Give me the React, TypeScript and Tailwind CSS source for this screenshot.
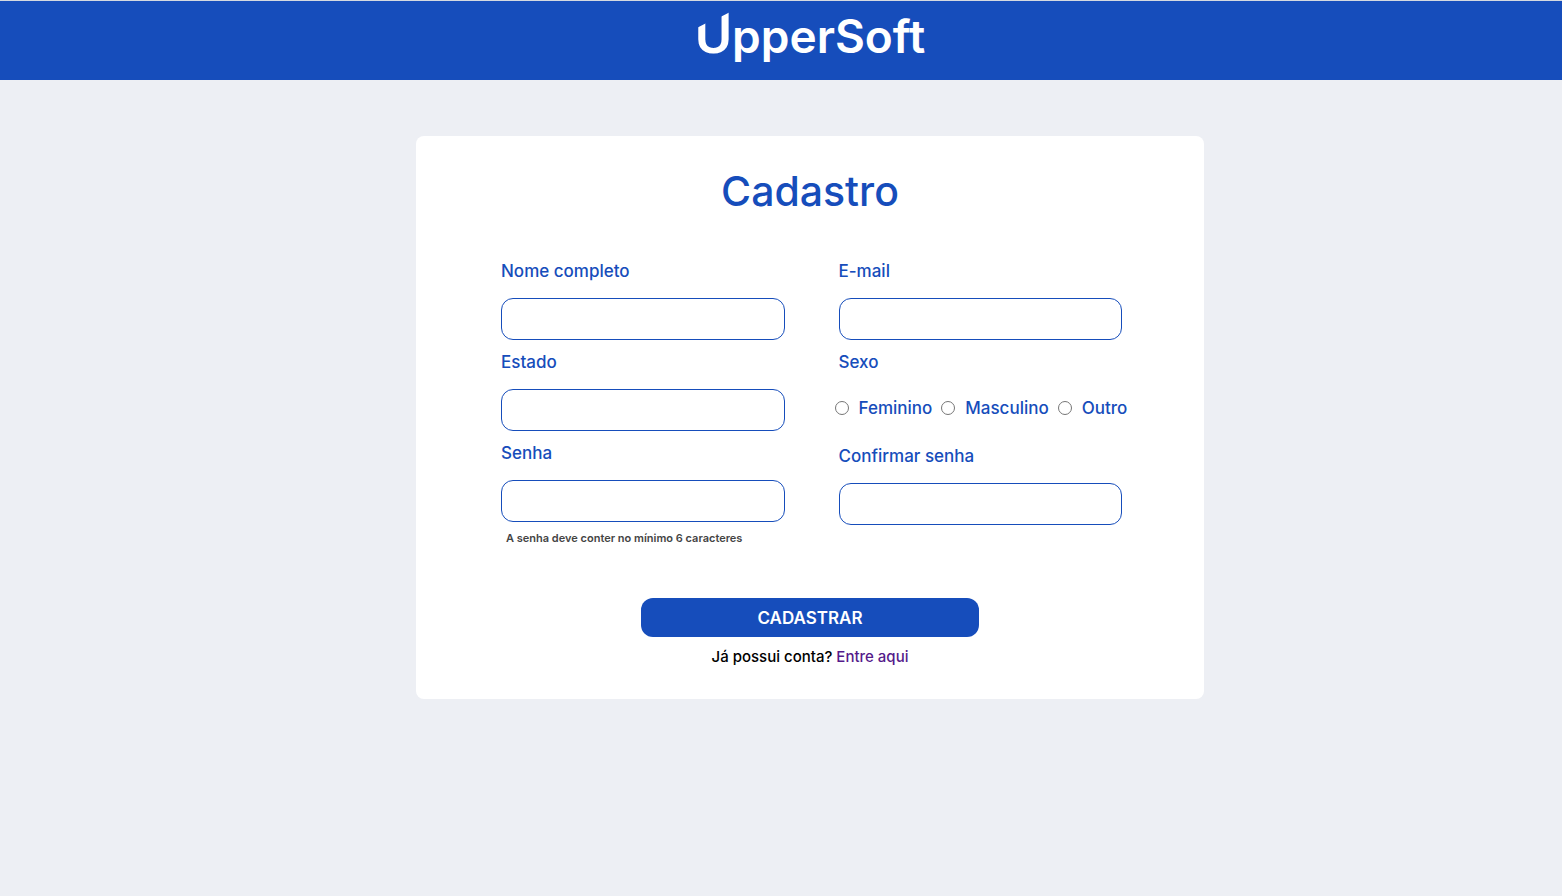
import type { ReactNode } from "react";

function Field({ id, label, type = "text", children }: { id: string; label: string; type?: string; children?: ReactNode }) {
  return (
    <div>
      <label htmlFor={id} className="mb-[17px] block text-[17px] leading-5 font-medium">
        {label}
      </label>
      <input
        id={id}
        name={id}
        type={type}
        className="block h-[42px] w-full rounded-xl border border-[#164dbb] bg-white px-3 text-base outline-none focus:ring-1 focus:ring-[#164dbb]"
      />
      {children}
    </div>
  );
}

function Option({ value, label }: { value: string; label: string }) {
  return (
    <label className="flex items-center gap-[10px]">
      <input
        type="radio"
        name="sexo"
        value={value}
        className="size-[14px] shrink-0 appearance-none rounded-full border border-[#767676] bg-white checked:border-4 checked:border-[#164dbb]"
      />
      {label}
    </label>
  );
}

function Logo() {
  return (
    <a href="#" aria-label="UpperSoft" className="flex items-baseline text-white">
      <span className="font-['Roboto',sans-serif] text-[57px] leading-[64px] font-medium [clip-path:polygon(0_43%,30%_34%,30%_60%,65%_60%,70%_24%,100%_15%,100%_100%,0_100%)]">
        U
      </span>
      <span className="text-[46px] leading-[64px] font-semibold">pperSoft</span>
    </a>
  );
}

export default function App() {
  return (
    <div className="min-h-screen bg-[#edeff4] font-['Inter',sans-serif] text-[#164dbb]">
      <header className="flex h-20 items-center justify-center border-t border-[#d5d9e0] bg-[#164dbb] pb-3 pl-[58px]">
        <Logo />
      </header>
      <main className="flex justify-center pt-14 pl-[58px]">
        <form
          className="w-full max-w-[788px] rounded-lg bg-white px-[82px] pt-[30px] pb-8"
          onSubmit={(event) => event.preventDefault()}
        >
          <h1 className="text-center text-[41px] leading-[50px] font-medium">Cadastro</h1>
          <div className="mt-[45px] grid grid-cols-2 gap-x-[54px] pl-[3px]">
            <div className="flex flex-col gap-3">
              <Field id="nome" label="Nome completo" />
              <Field id="estado" label="Estado" />
              <Field id="senha" label="Senha" type="password">
                <p className="mt-[6px] pl-[5px] text-[11px] leading-5 font-semibold text-[#444444]">
                  A senha deve conter no mínimo 6 caracteres
                </p>
              </Field>
            </div>
            <div className="flex flex-col gap-3">
              <Field id="email" label="E-mail" type="email" />
              <fieldset className="h-[82px]">
                <legend className="mb-[17px] text-[17px] leading-5 font-medium">Sexo</legend>
                <div className="-mx-1 flex h-[38px] items-center gap-[9px] text-[17px] leading-5 font-medium">
                  <Option value="feminino" label="Feminino" />
                  <Option value="masculino" label="Masculino" />
                  <Option value="outro" label="Outro" />
                </div>
              </fieldset>
              <Field id="confirmar-senha" label="Confirmar senha" type="password" />
            </div>
          </div>
          <div className="mt-[50px] flex flex-col items-center gap-[10px]">
            <button type="submit" className="h-[39px] w-full max-w-[338px] rounded-xl bg-[#164dbb] text-[17px] leading-5 font-semibold text-white">
              CADASTRAR
            </button>
            <p className="text-[15px] leading-5 font-medium text-black">
              Já possui conta?{" "}
              <a href="#" className="text-[#551a8b]">
                Entre aqui
              </a>
            </p>
          </div>
        </form>
      </main>
    </div>
  );
}
